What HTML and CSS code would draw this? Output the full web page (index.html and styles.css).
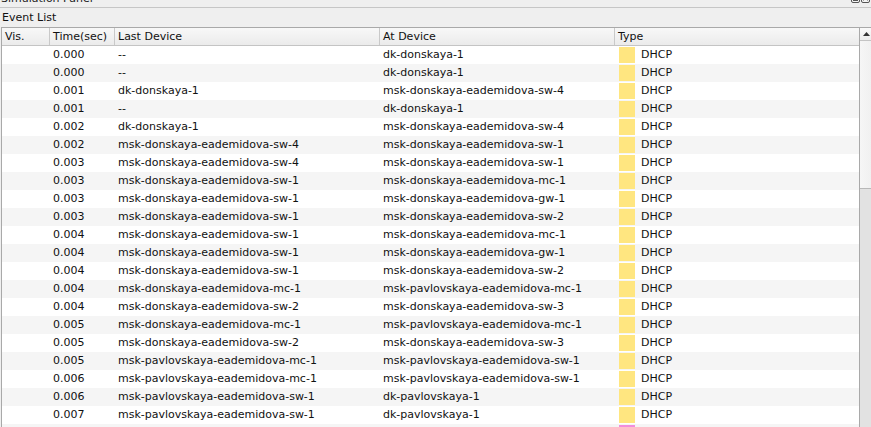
FILE: index.html
```html
<!DOCTYPE html>
<html>
<head>
<meta charset="utf-8">
<link rel="stylesheet" href="styles.css">
</head>
<body>
<div class="panel">
  <div class="titlebar">
    <span class="title">Simulation Panel</span>
    <div class="win-icons">
      <svg class="wicon" width="9" height="9" viewBox="0 0 9 9"><rect x="0.5" y="0.5" width="8" height="8" rx="1.5" fill="#f4f4f4" stroke="#555"/><line x1="2" y1="6.5" x2="7" y2="6.5" stroke="#555"/></svg>
      <svg class="wicon" width="9" height="9" viewBox="0 0 9 9"><rect x="0.5" y="0.5" width="8" height="8" rx="1.5" fill="#f4f4f4" stroke="#555"/><path d="M2.5 2.5 L6.5 6.5 M6.5 2.5 L2.5 6.5" stroke="#555"/></svg>
    </div>
  </div>
  <div class="section-label">Event List</div>
  <div class="frame">
    <div class="table">
      <div class="row head">
        <div class="cell">Vis.</div>
        <div class="cell">Time(sec)</div>
        <div class="cell">Last Device</div>
        <div class="cell">At Device</div>
        <div class="cell">Type</div>
      </div>
      <div class="row"><div class="cell"></div><div class="cell">0.000</div><div class="cell">--</div><div class="cell">dk-donskaya-1</div><div class="cell type"><span class="sw dhcp"></span>DHCP</div></div>
      <div class="row"><div class="cell"></div><div class="cell">0.000</div><div class="cell">--</div><div class="cell">dk-donskaya-1</div><div class="cell type"><span class="sw dhcp"></span>DHCP</div></div>
      <div class="row"><div class="cell"></div><div class="cell">0.001</div><div class="cell">dk-donskaya-1</div><div class="cell">msk-donskaya-eademidova-sw-4</div><div class="cell type"><span class="sw dhcp"></span>DHCP</div></div>
      <div class="row"><div class="cell"></div><div class="cell">0.001</div><div class="cell">--</div><div class="cell">dk-donskaya-1</div><div class="cell type"><span class="sw dhcp"></span>DHCP</div></div>
      <div class="row"><div class="cell"></div><div class="cell">0.002</div><div class="cell">dk-donskaya-1</div><div class="cell">msk-donskaya-eademidova-sw-4</div><div class="cell type"><span class="sw dhcp"></span>DHCP</div></div>
      <div class="row"><div class="cell"></div><div class="cell">0.002</div><div class="cell">msk-donskaya-eademidova-sw-4</div><div class="cell">msk-donskaya-eademidova-sw-1</div><div class="cell type"><span class="sw dhcp"></span>DHCP</div></div>
      <div class="row"><div class="cell"></div><div class="cell">0.003</div><div class="cell">msk-donskaya-eademidova-sw-4</div><div class="cell">msk-donskaya-eademidova-sw-1</div><div class="cell type"><span class="sw dhcp"></span>DHCP</div></div>
      <div class="row"><div class="cell"></div><div class="cell">0.003</div><div class="cell">msk-donskaya-eademidova-sw-1</div><div class="cell">msk-donskaya-eademidova-mc-1</div><div class="cell type"><span class="sw dhcp"></span>DHCP</div></div>
      <div class="row"><div class="cell"></div><div class="cell">0.003</div><div class="cell">msk-donskaya-eademidova-sw-1</div><div class="cell">msk-donskaya-eademidova-gw-1</div><div class="cell type"><span class="sw dhcp"></span>DHCP</div></div>
      <div class="row"><div class="cell"></div><div class="cell">0.003</div><div class="cell">msk-donskaya-eademidova-sw-1</div><div class="cell">msk-donskaya-eademidova-sw-2</div><div class="cell type"><span class="sw dhcp"></span>DHCP</div></div>
      <div class="row"><div class="cell"></div><div class="cell">0.004</div><div class="cell">msk-donskaya-eademidova-sw-1</div><div class="cell">msk-donskaya-eademidova-mc-1</div><div class="cell type"><span class="sw dhcp"></span>DHCP</div></div>
      <div class="row"><div class="cell"></div><div class="cell">0.004</div><div class="cell">msk-donskaya-eademidova-sw-1</div><div class="cell">msk-donskaya-eademidova-gw-1</div><div class="cell type"><span class="sw dhcp"></span>DHCP</div></div>
      <div class="row"><div class="cell"></div><div class="cell">0.004</div><div class="cell">msk-donskaya-eademidova-sw-1</div><div class="cell">msk-donskaya-eademidova-sw-2</div><div class="cell type"><span class="sw dhcp"></span>DHCP</div></div>
      <div class="row"><div class="cell"></div><div class="cell">0.004</div><div class="cell">msk-donskaya-eademidova-mc-1</div><div class="cell">msk-pavlovskaya-eademidova-mc-1</div><div class="cell type"><span class="sw dhcp"></span>DHCP</div></div>
      <div class="row"><div class="cell"></div><div class="cell">0.004</div><div class="cell">msk-donskaya-eademidova-sw-2</div><div class="cell">msk-donskaya-eademidova-sw-3</div><div class="cell type"><span class="sw dhcp"></span>DHCP</div></div>
      <div class="row"><div class="cell"></div><div class="cell">0.005</div><div class="cell">msk-donskaya-eademidova-mc-1</div><div class="cell">msk-pavlovskaya-eademidova-mc-1</div><div class="cell type"><span class="sw dhcp"></span>DHCP</div></div>
      <div class="row"><div class="cell"></div><div class="cell">0.005</div><div class="cell">msk-donskaya-eademidova-sw-2</div><div class="cell">msk-donskaya-eademidova-sw-3</div><div class="cell type"><span class="sw dhcp"></span>DHCP</div></div>
      <div class="row"><div class="cell"></div><div class="cell">0.005</div><div class="cell">msk-pavlovskaya-eademidova-mc-1</div><div class="cell">msk-pavlovskaya-eademidova-sw-1</div><div class="cell type"><span class="sw dhcp"></span>DHCP</div></div>
      <div class="row"><div class="cell"></div><div class="cell">0.006</div><div class="cell">msk-pavlovskaya-eademidova-mc-1</div><div class="cell">msk-pavlovskaya-eademidova-sw-1</div><div class="cell type"><span class="sw dhcp"></span>DHCP</div></div>
      <div class="row"><div class="cell"></div><div class="cell">0.006</div><div class="cell">msk-pavlovskaya-eademidova-sw-1</div><div class="cell">dk-pavlovskaya-1</div><div class="cell type"><span class="sw dhcp"></span>DHCP</div></div>
      <div class="row"><div class="cell"></div><div class="cell">0.007</div><div class="cell">msk-pavlovskaya-eademidova-sw-1</div><div class="cell">dk-pavlovskaya-1</div><div class="cell type"><span class="sw dhcp"></span>DHCP</div></div>
      <div class="row"><div class="cell"></div><div class="cell">0.007</div><div class="cell">msk-pavlovskaya-eademidova-sw-1</div><div class="cell">dk-pavlovskaya-1</div><div class="cell type"><span class="sw other"></span>STP</div></div>
    </div>
    <div class="scrollbar">
      <div class="sb-up"><svg width="7" height="4" viewBox="0 0 7 4"><path d="M0 4 L3.5 0 L7 4 Z" fill="#333"/></svg></div>
      <div class="sb-handle"></div>
      <div class="sb-track"></div>
    </div>
  </div>
</div>
</body>
</html>
```
FILE: styles.css
```css
html, body {
  margin: 0;
  padding: 0;
}
body {
  width: 871px;
  height: 427px;
  overflow: hidden;
  background: #efefef;
  font-family: "DejaVu Sans", "Liberation Sans", sans-serif;
  font-size: 11px;
  color: #111;
}
.panel {
  display: flex;
  flex-direction: column;
  height: 427px;
}
.titlebar {
  height: 7px;
  border-bottom: 1px solid #c6c6c6;
  display: flex;
  justify-content: space-between;
  overflow: hidden;
  background: #efefef;
}
.title {
  display: block;
  margin-top: -8px;
  line-height: 14px;
  font-size: 11px;
  padding-left: 1px;
  color: #222;
}
.win-icons {
  display: flex;
  gap: 1px;
  margin-top: -6px;
  margin-right: 1px;
}
.wicon {
  display: block;
}
.section-label {
  height: 19px;
  line-height: 19px;
  padding-left: 2px;
  color: #111;
}
.frame {
  margin-left: 1px;
  border-left: 1px solid #a9a9a9;
  border-top: 1px solid #a9a9a9;
  display: flex;
  flex: 1;
  overflow: hidden;
  background: #fff;
}
.table {
  width: 857px;
  flex: none;
}
.row {
  display: grid;
  grid-template-columns: 48px 65px 265px 235px 244px;
  height: 18px;
  line-height: 18px;
  background: #fff;
}
.row:nth-child(odd) {
  background: #f5f5f5;
}
.row.head {
  height: 18px;
  line-height: 17px;
  background: linear-gradient(#f8f8f8, #ebebeb);
  border-bottom: 1px solid #c4c4c4;
  box-sizing: border-box;
}
.cell {
  padding-left: 3px;
  white-space: nowrap;
  overflow: hidden;
  box-sizing: border-box;
}
.head .cell {
  border-right: 1px solid #c9c9c9;
  padding-left: 3px;
}
.head .cell:last-child {
  border-right: none;
}
.type {
  display: flex;
  align-items: flex-start;
  padding-left: 4px;
}
.sw {
  width: 16px;
  height: 16px;
  margin-top: 1px;
  margin-right: 6px;
  flex: none;
}
.sw.dhcp {
  background: #ffe680;
}
.sw.other {
  background: #f28ddc;
}
.scrollbar {
  width: 12px;
  flex: none;
  border-left: 1px solid #a9a9a9;
  display: flex;
  flex-direction: column;
  background: #e3e3e3;
}
.sb-up {
  height: 12px;
  display: flex;
  align-items: center;
  justify-content: center;
  background: linear-gradient(#fafafa, #ececec);
  border-bottom: 1px solid #c4c4c4;
}
.sb-handle {
  height: 147px;
  background: linear-gradient(90deg, #f6f6f6, #f0f0f0);
  border-bottom: 1px solid #b8b8b8;
}
.sb-track {
  flex: 1;
  background: #e2e2e2;
}
```
